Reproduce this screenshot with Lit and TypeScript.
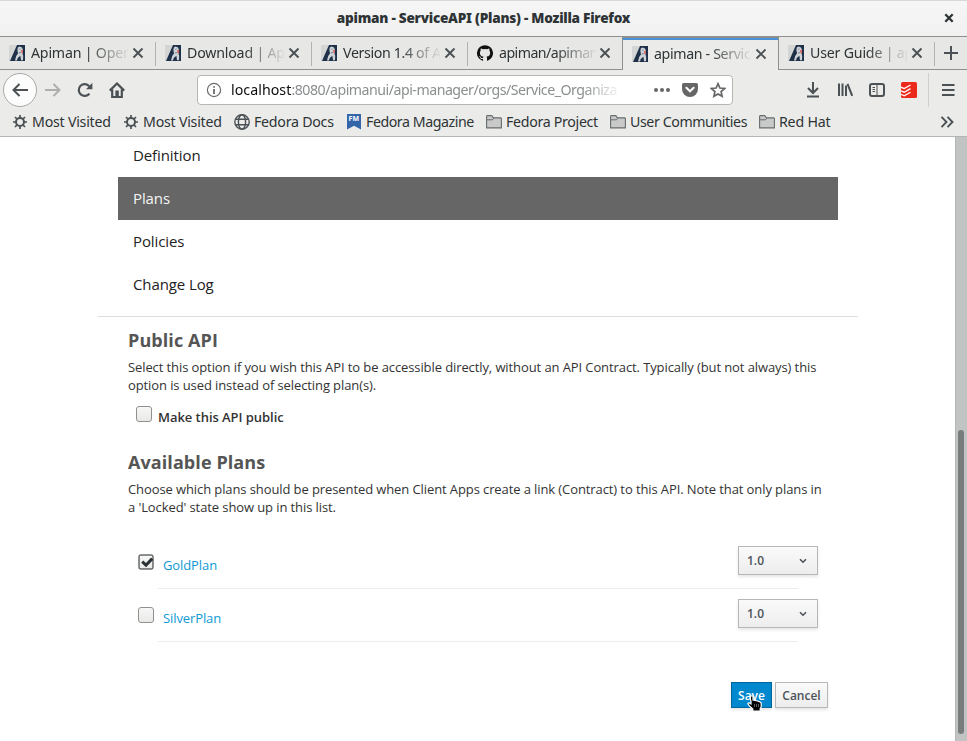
import { LitElement, html, svg, css } from "lit";
import { customElement } from "lit/decorators.js";

const icon = (w: number, h: number, body: unknown) =>
  html`<svg width=${w} height=${h} viewBox="0 0 ${w} ${h}" fill="none">${body}</svg>`;

const apimanLogo = icon(16, 16, svg`
  <rect width="16" height="16" fill="#d4d5d5"/>
  <path d="M8 0H16V16H1Z" fill="#1f3149"/>
  <path d="M8.8 2.6L10.6 1.6L13 2.4L13.8 4.4L13.4 8L14.2 11L14 15.2H12L11.4 10.8L8.7 13L8 15.6H6L7.2 11L9 8.5L8.4 5Z" fill="#cfd3d8"/>
  <path d="M10.2 4.5L11.6 3.8M9.8 8L12 7.5" stroke="#7b8796"/>
  <path d="M12 5H14V8H12.4Z" fill="#d86a68"/>`);
const githubLogo = icon(16, 16, svg`
  <path fill="#111" d="M8 .2a8 8 0 0 0-2.53 15.59c.4.07.55-.17.55-.38v-1.5c-2.01.37-2.53-.49-2.69-.94-.09-.23-.48-.94-.82-1.13-.28-.15-.68-.52-.01-.53.63-.01 1.08.58 1.23.82.72 1.21 1.87.87 2.33.66.07-.52.28-.87.51-1.07-1.78-.2-3.64-.89-3.64-3.95 0-.87.31-1.59.82-2.15-.08-.2-.36-1.02.08-2.12 0 0 .67-.21 2.2.82a7.6 7.6 0 0 1 4 0c1.53-1.04 2.2-.82 2.2-.82.44 1.1.16 1.92.08 2.12.51.56.82 1.27.82 2.15 0 3.07-1.87 3.75-3.65 3.95.29.25.54.73.54 1.48v2.2c0 .21.15.46.55.38A8 8 0 0 0 8 .2Z"/>`);
const closeX = icon(12, 12, svg`<path d="M1.5 1.5L10.5 10.5M10.5 1.5L1.5 10.5" stroke="#4b5154" stroke-width="1.9"/>`);
const gear = icon(16, 16, svg`
  <circle cx="8" cy="8" r="4" stroke="#4b5154" stroke-width="2"/>
  <path d="M8 1V3.5M8 12.5V15M1 8H3.5M12.5 8H15M3 3L5 5M11 11L13 13M13 3L11 5M5 11L3 13" stroke="#4b5154" stroke-width="1.7"/>`);
const globe = icon(16, 16, svg`
  <g stroke="#4b5154" stroke-width="1.4"><circle cx="8" cy="8" r="7.2"/><ellipse cx="8" cy="8" rx="3.6" ry="7.2"/><path d="M1.5 5.3H14.5M1.5 10.7H14.5"/></g>`);
const magazine = html`<span class="fm">FM</span>`;
const folder = icon(16, 14, svg`
  <path d="M.6 12.9V1.2L1.2.6H5.8L7.4 2.9H14.8L15.4 3.5V12.9Z" fill="#c8c9c8" stroke="#676c6e" stroke-width="1.1"/>
  <path d="M1 4.8H6.5L7.8 3.2" stroke="#676c6e"/>`);
const checkMark = icon(16, 16, svg`
  <rect x="1.5" y="1.5" width="13" height="13" stroke="#1b1f20" stroke-dasharray="1 1"/>
  <path d="M4.2 7.6L8 11.2L14.2 4.6" stroke="#2a3033" stroke-width="3"/>`);
const caret = icon(8, 6, svg`<path d="M1 1.2L4 4.2L7 1.2" stroke="#4d5258" stroke-width="1.6"/>`);

const tabs = [
  { logo: apimanLogo, text: "Apiman | Open", cls: "a" },
  { logo: apimanLogo, text: "Download | Ap", cls: "b" },
  { logo: apimanLogo, text: "Version 1.4 of A", cls: "c" },
  { logo: githubLogo, text: "apiman/apiman", cls: "d" },
  { logo: apimanLogo, text: "apiman - Servic", cls: "active e" },
  { logo: apimanLogo, text: "User Guide | ap", cls: "f" },
];
const bookmarks = [
  { mark: gear, text: "Most Visited", cls: "w1" },
  { mark: gear, text: "Most Visited", cls: "w2" },
  { mark: globe, text: "Fedora Docs", cls: "w3" },
  { mark: magazine, text: "Fedora Magazine", cls: "w4" },
  { mark: folder, text: "Fedora Project", cls: "w5" },
  { mark: folder, text: "User Communities", cls: "w6" },
  { mark: folder, text: "Red Hat", cls: "w7" },
];

@customElement("browser-chrome")
class BrowserChrome extends LitElement {
  static styles = css`
    :host { display: block; height: 137px; box-sizing: border-box; background: #ebebe9; color: #2e3436;
      font: 14.2px/20px "Noto Sans", "Open Sans", sans-serif; border-bottom: 1px solid #b5b5b2; }
    * { box-sizing: border-box; }
    svg { display: block; flex: none; }
    .title { height: 37px; background: linear-gradient(#f6f6f6, #f1f1f1); border-bottom: 1px solid #8f918d;
      display: grid; grid-template-columns: 40px 1fr 40px; align-items: center; text-align: center;
      font-weight: 700; box-shadow: inset 0 1px #d8d8d7; }
    .title b { letter-spacing: -.25px; font-size: 13.6px; grid-column: 2; }
    .title svg { margin-left: 17px; }
    .tabs { display: flex; height: 33px; background: #e7e7e5; }
    .tab { width: 156px; display: flex; align-items: center; padding-left: 9px; border-bottom: 1px solid #8f918d;
      position: relative; flex: none; }
    .tab:not(.active):not(.d)::after { content: ""; position: absolute; right: 0; top: 5px; width: 1px; height: 24px; background: #b3b3b1; }
    .tab.active { background: #ebebe9; border: solid #8f918d; border-width: 0 1px; box-shadow: inset 0 1px #8f918d, inset 0 3px #4a90d9; margin-left: -2px; width: 157px; }
    .label { width: 97px; margin: 0 4px 0 6px; white-space: nowrap; flex: none; letter-spacing: -.2px;
      -webkit-mask-image: linear-gradient(90deg, #000 58%, transparent 102%); mask-image: linear-gradient(90deg, #000 58%, transparent 102%); }
    .c .label, .e .label { letter-spacing: -.35px; }
    .d .label { margin-right: 3px; letter-spacing: -.55px; }
    .plus { flex: 1; border-bottom: 1px solid #8f918d; display: grid; place-items: center; }
    .nav { display: flex; height: 40px; align-items: center; padding-left: 3px; }
    .back { width: 34px; height: 34px; border: 1px solid #a9aaa8; border-radius: 50%; background: #fcfcfc; display: grid; place-items: center; }
    .fwd { margin-left: 8px; } .reload { margin-left: 16px; } .home { margin-left: 16px; }
    .url { margin-left: 72px; width: 536px; height: 30px; border: 1px solid #b6b6b3; border-radius: 4px; background: #fff;
      display: flex; align-items: center; padding: 0 6px 0 8px; }
    .addr { width: 391px; margin: 0 32px 0 9px; white-space: nowrap; color: #8b8e8f; letter-spacing: -.5px;
      -webkit-mask-image: linear-gradient(90deg, #000 90%, transparent 100%); mask-image: linear-gradient(90deg, #000 90%, transparent 100%); }
    .addr span { color: #0c0d0e; letter-spacing: .05px; }
    .pocket, .star { margin-left: 12px; }
    .dl { margin-left: 72px; } .lib { margin-left: 16px; } .side { margin-left: 16px; } .todo { margin-left: 16px; }
    .sep { width: 1px; height: 34px; background: #cfcfcc; margin: 0 13px 0 11px; }
    .marks { display: flex; height: 23px; align-items: center; padding-left: 12px; white-space: nowrap; }
    .mark { display: flex; align-items: center; gap: 4px; flex: none; }
    .w1 { width: 111px; letter-spacing: -.23px; } .w2 { width: 111px; letter-spacing: -.23px; } .w3 { width: 112px; letter-spacing: -.25px; }
    .w4 { width: 140px; letter-spacing: -.45px; } .w5 { width: 124px; letter-spacing: -.31px; } .w6 { width: 149px; letter-spacing: -.41px; }
    .w7 { width: 181px; letter-spacing: -.2px; }
    .fm { width: 14px; height: 16px; margin: 0 1px; background: #3465a8; clip-path: polygon(0 0, 100% 0, 100% 100%, 50% 76%, 0 100%);
      font: 700 7px/10px "Open Sans", sans-serif; color: #fff; text-align: center; letter-spacing: .2px; }
  `;
  render() {
    const s = "#4b5154";
    return html`
      <div class="title"><b>apiman - ServiceAPI (Plans) - Mozilla Firefox</b>${icon(10, 10, svg`<path d="M1.3 1.3L8.7 8.7M8.7 1.3L1.3 8.7" stroke="#2e3436" stroke-width="2.3"/>`)}</div>
      <div class="tabs">
        ${tabs.map((t) => html`<div class="tab ${t.cls}">${t.logo}<span class="label">${t.text}</span>${closeX}</div>`)}
        <div class="plus">${icon(14, 14, svg`<path d="M7 0V14M0 7H14" stroke=${s} stroke-width="2"/>`)}</div>
      </div>
      <div class="nav">
        <div class="back">${icon(16, 14, svg`<path d="M1.5 7H16M7.5 1L1.5 7L7.5 13" stroke=${s} stroke-width="2"/>`)}</div>
        <div class="fwd">${icon(16, 14, svg`<path d="M0 7H14.5M8.5 1L14.5 7L8.5 13" stroke="#adaead" stroke-width="2"/>`)}</div>
        <div class="reload">${icon(16, 16, svg`<path d="M12.4 11.6A5.9 5.9 0 1 1 12.2 4.2" stroke=${s} stroke-width="2.2"/><path d="M15.4 .8V7.2H9Z" fill=${s}/>`)}</div>
        <div class="home">${icon(16, 16, svg`<path d="M.8 8.6L8 1.5L15.2 8.6M3.2 7.5V15H12.8V7.5" stroke=${s} stroke-width="2.2"/><rect x="6.4" y="8.5" width="3.4" height="6.5" fill=${s}/>`)}</div>
        <div class="url">
          ${icon(16, 16, svg`<circle cx="8" cy="8" r="6.6" stroke="#6b6d6e" stroke-width="1.2"/><path d="M8 7V12M8 4.2V5.8" stroke="#6b6d6e" stroke-width="1.8"/>`)}
          <div class="addr"><span>localhost</span>:8080/apimanui/api-manager/orgs/Service_Organiza</div>
          ${icon(16, 4, svg`<g fill="#666"><circle cx="2" cy="2" r="2"/><circle cx="8" cy="2" r="2"/><circle cx="14" cy="2" r="2"/></g>`)}
          <div class="pocket">${icon(16, 14, svg`<path d="M1.5 0H14.5Q16 0 16 1.5V6A8 8 0 0 1 0 6V1.5Q0 0 1.5 0Z" fill="#666"/><path d="M4.4 4.8L8 8.3L11.6 4.8" stroke="#fff" stroke-width="2" stroke-linecap="round"/>`)}</div>
          <div class="star">${icon(16, 16, svg`<path d="M8 1.7L9.9 6L14.6 6.5L11.1 9.6L12.1 14.3L8 11.9L3.9 14.3L4.9 9.6L1.4 6.5L6.1 6Z" stroke="#666" stroke-width="1.7"/>`)}</div>
        </div>
        <div class="dl">${icon(16, 16, svg`<path d="M8 0V11M3 6L8 11L13 6M2 14.5H14" stroke=${s} stroke-width="2"/>`)}</div>
        <div class="lib">${icon(16, 16, svg`<path d="M2 1.5V14M5.5 1.5V14M9 3.5V14M10.5 1.8L15.2 13.8" stroke=${s} stroke-width="2"/>`)}</div>
        <div class="side">${icon(16, 14, svg`<rect x="1" y="1" width="14" height="12" rx="2" stroke=${s} stroke-width="2"/><path d="M8 1V13M3.5 4.5H6M3.5 6.5H6M3.5 8.5H6" stroke=${s}/>`)}</div>
        <div class="todo">${icon(16, 16, svg`<rect width="16" height="16" rx="1.5" fill="#ec2a1b"/><path d="M0 5.2L3.2 6.6L9.5 3M0 8.8L3.2 10.2L9.5 6.6M0 12.4L3.2 13.8L9.5 10.2" stroke="#fff" stroke-width="1.3"/>`)}</div>
        <div class="sep"></div>
        ${icon(13, 14, svg`<path d="M0 2H12.5M0 7H12.5M0 12H12.5" stroke=${s} stroke-width="2"/>`)}
      </div>
      <div class="marks">
        ${bookmarks.map((b) => html`<div class="mark ${b.cls}">${b.mark}<span>${b.text}</span></div>`)}
        ${icon(14, 12, svg`<path d="M1.5 .8L6.5 6L1.5 11.2M7.5 .8L12.5 6L7.5 11.2" stroke=${s} stroke-width="1.9"/>`)}
      </div>`;
  }
}

@customElement("plans-page")
class PlansPage extends LitElement {
  static styles = css`
    :host { display: block; flex: 1; min-width: 0; background: #fff; color: #333; font: 13px/18px "Open Sans", sans-serif; }
    * { box-sizing: border-box; }
    svg { display: block; }
    .menu { margin: 0 117px 0 118px; padding-bottom: 10px; }
    .item { height: 43px; padding: 0 15px; font-size: 15px; line-height: 43px; color: #222; letter-spacing: -.1px; }
    .item:first-child { height: 40px; line-height: 37px; }
    .item.on { background: #666; color: #f5f5f5; }
    .body { margin: 0 97px 0 98px; border-top: 1px solid #ddd; padding: 11px 30px 0; height: 420px; }
    h2 { margin: 0; font-size: 18px; line-height: 24px; font-weight: 700; color: #555; letter-spacing: .08px; }
    p { margin: 6px 0 0; white-space: nowrap; letter-spacing: -.098px; }
    .public { display: flex; gap: 6px; padding: 12px 0 0 8px; height: 56px; font-weight: 600; letter-spacing: -.05px; }
    .public span { margin-top: 2px; }
    .box { width: 16px; height: 16px; border: 1px solid #8f918d; border-radius: 3px; background: linear-gradient(#f7f7f7, #e9e9e8); flex: none; }
    .box svg { margin: -1px; }
    .list { margin-top: 25px; }
    .plan { height: 53px; display: grid; grid-template-columns: 25px 575px 80px; padding: 5px 0 0 10px; position: relative; }
    .plan::after { content: ""; position: absolute; left: 30px; right: 30px; bottom: 5px; height: 1px; background: #ececec; }
    .plan .box { margin-top: 8px; }
    .plan a { color: #0f99d3; margin-top: 10px; letter-spacing: -.1px; }
    .pick, .btn { border: 1px solid #b7b7b7; background: linear-gradient(#fafafa, #ededed); color: #4d5258; font-weight: 600; font-size: 12px;
      box-shadow: 0 2px 3px rgba(3, 3, 3, .1); }
    .pick { height: 29px; width: 80px; display: flex; align-items: center; justify-content: space-between; padding: 0 10px 0 8px; }
    .actions { display: flex; justify-content: flex-end; gap: 3px; margin-top: 35px; }
    .btn { height: 26px; line-height: 25px; width: 53px; text-align: center; }
    .btn.save { width: 41px; background: #0088ce; border-color: #00659c; color: #fff; position: relative; }
    .cursor { position: absolute; left: 15px; top: 12px; }
  `;
  render() {
    return html`
      <div class="menu">
        <div class="item">Definition</div><div class="item on">Plans</div><div class="item">Policies</div><div class="item">Change Log</div>
      </div>
      <div class="body">
        <h2>Public API</h2>
        <p>Select this option if you wish this API to be accessible directly, without an API Contract. Typically (but not always) this<br>option is used instead of selecting plan(s).</p>
        <div class="public"><i class="box"></i><span>Make this API public</span></div>
        <h2>Available Plans</h2>
        <p>Choose which plans should be presented when Client Apps create a link (Contract) to this API. Note that only plans in<br>a 'Locked' state show up in this list.</p>
        <div class="list">
          ${["GoldPlan", "SilverPlan"].map((name, i) => html`
            <div class="plan"><i class="box">${i === 0 ? checkMark : ""}</i><a>${name}</a><div class="pick"><span>1.0</span>${caret}</div></div>`)}
        </div>
        <div class="actions">
          <div class="btn save">Save<div class="cursor">${icon(18, 18, svg`
            <path d="M3.5 1H6V5L8 5.3L10.5 6L12.5 6.6L14.2 8V12L13.2 13.5V16H5.8V14L2.5 11L.8 8.6L2 7.7L4 9V6L3.3 4Z" fill="#000" stroke="#fff" stroke-width="1.2"/>
            <path d="M7.5 9V12M9.5 9V12M11.5 9V12" stroke="#999" stroke-width=".6"/>`)}</div></div>
          <div class="btn">Cancel</div>
        </div>
      </div>`;
  }
}

@customElement("app-root")
class AppRoot extends LitElement {
  static styles = css`
    :host { display: flex; flex-direction: column; width: 967px; height: 741px; overflow: hidden; }
    .view { display: flex; flex: 1; }
    .scroll { width: 12px; flex: none; border-left: 1px solid #b5b6b5; background: #c2c4c3; padding: 293px 3px 7px 2px; display: flex; box-sizing: border-box; }
    .thumb { width: 6px; border-radius: 3px; background: #787c7c; }
  `;
  render() {
    return html`<browser-chrome></browser-chrome>
      <div class="view"><plans-page></plans-page><div class="scroll"><div class="thumb"></div></div></div>`;
  }
}
